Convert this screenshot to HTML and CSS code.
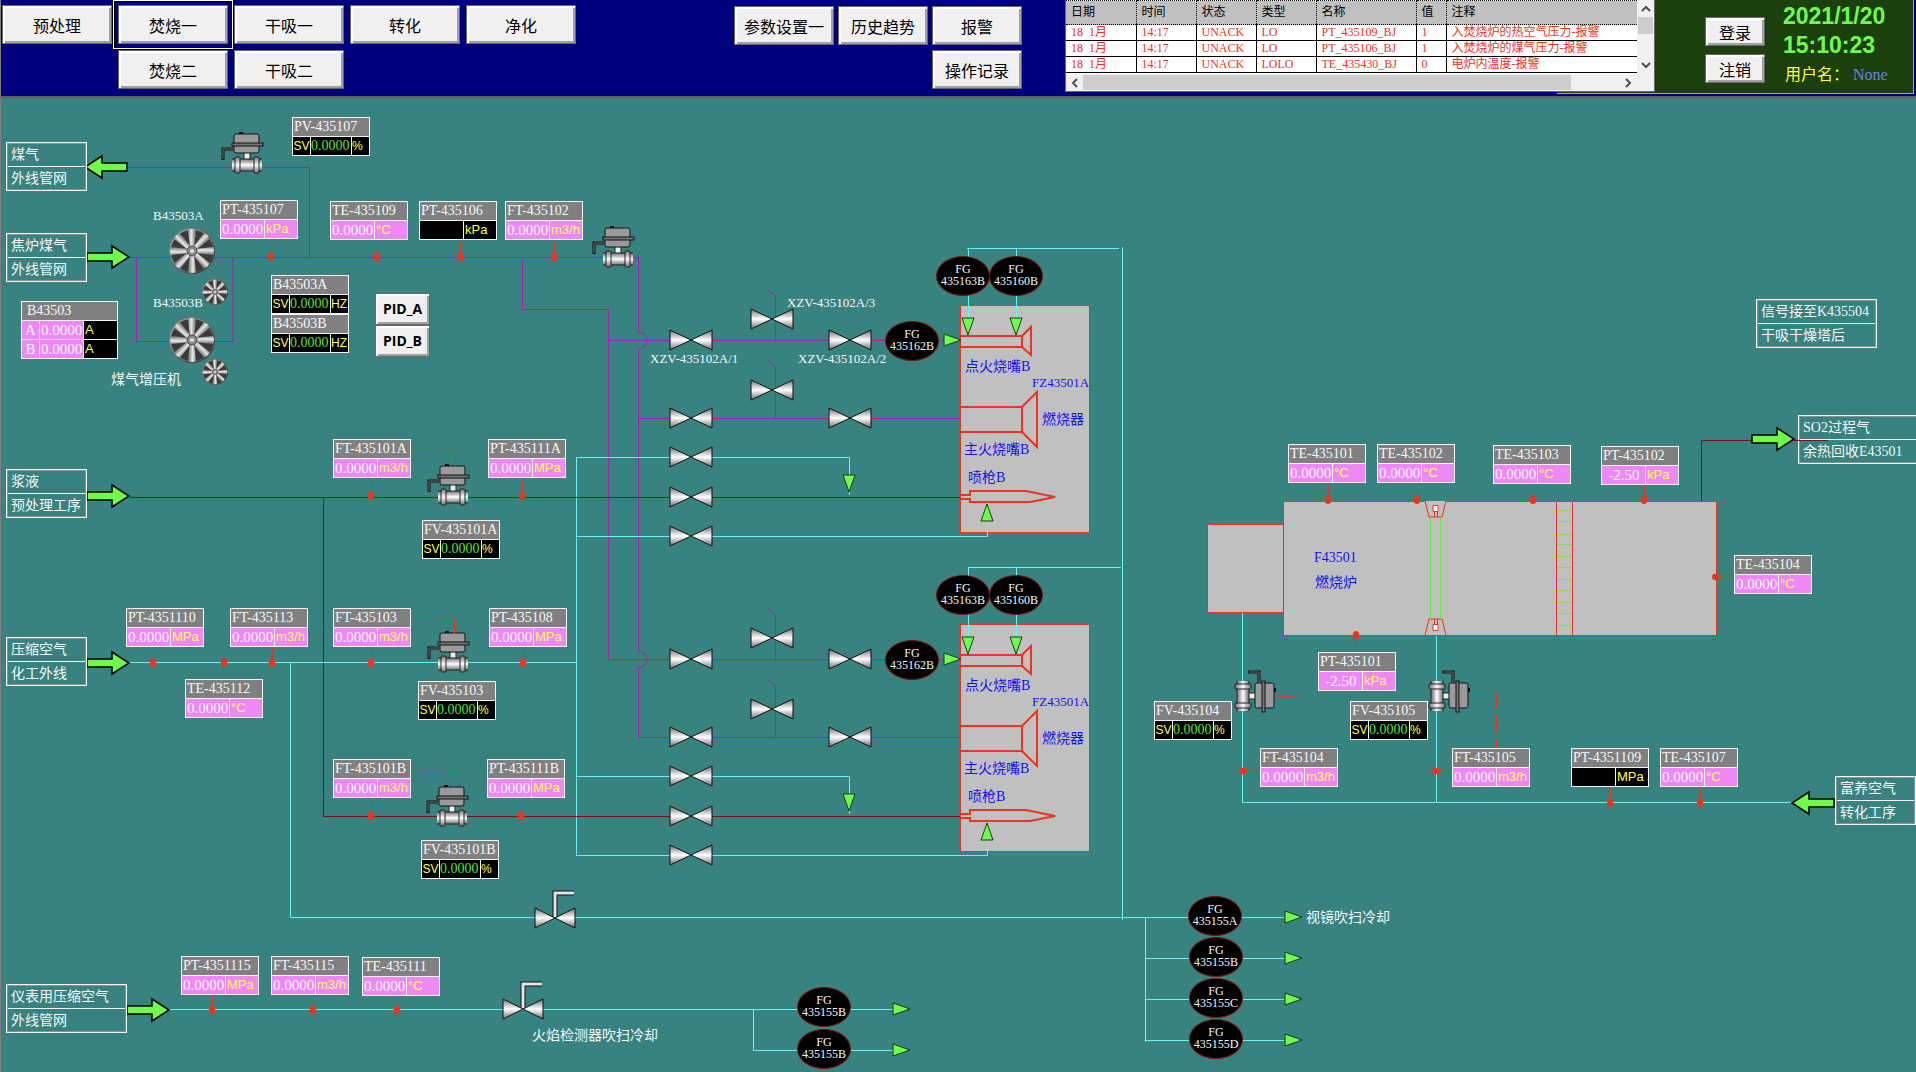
FILE: index.html
```html
<!DOCTYPE html>
<html lang="zh-CN">
<head>
<meta charset="utf-8">
<title>焚烧一</title>
<link rel="stylesheet" href="styles.css">
</head>
<body>
<header class="topbar">
  <nav class="pages">
    <button class="btn">预处理</button>
    <button class="btn btn-current" aria-current="page">焚烧一</button>
    <button class="btn">干吸一</button>
    <button class="btn">转化</button>
    <button class="btn">净化</button>
    <button class="btn col-2">焚烧二</button>
    <button class="btn">干吸二</button>
  </nav>
  <nav class="tools">
    <button class="btn">参数设置一</button>
    <button class="btn">历史趋势</button>
    <button class="btn">报警</button>
    <button class="btn col-3">操作记录</button>
  </nav>
  <section class="alarms">
    <div class="alarm-list">
      <table class="alarm-table">
        <colgroup><col class="c-date"><col class="c-mid"><col class="c-mid"><col class="c-mid"><col class="c-name"><col class="c-val"><col></colgroup>
        <thead><tr><th>日期</th><th>时间</th><th>状态</th><th>类型</th><th>名称</th><th>值</th><th>注释</th></tr></thead>
        <tbody>
          <tr><td>18&nbsp; 1月</td><td>14:17</td><td>UNACK</td><td>LO</td><td>PT_435109_BJ</td><td>1</td><td>入焚烧炉的热空气压力-报警</td></tr>
          <tr><td>18&nbsp; 1月</td><td>14:17</td><td>UNACK</td><td>LO</td><td>PT_435106_BJ</td><td>1</td><td>入焚烧炉的煤气压力-报警</td></tr>
          <tr><td>18&nbsp; 1月</td><td>14:17</td><td>UNACK</td><td>LOLO</td><td>TE_435430_BJ</td><td>0</td><td>电炉内温度-报警</td></tr>
        </tbody>
      </table>
      <div class="scroll scroll-v">
        <svg class="chev" viewBox="0 0 10 10"><path d="M1 7 5 3 9 7"/></svg>
        <span class="thumb-v"></span>
        <svg class="chev push" viewBox="0 0 10 10"><path d="M1 3 5 7 9 3"/></svg>
      </div>
    </div>
    <div class="scroll scroll-h">
      <svg class="chev" viewBox="0 0 10 10"><path d="M7 1 3 5 7 9"/></svg>
      <span class="thumb-h"></span>
      <svg class="chev push" viewBox="0 0 10 10"><path d="M3 1 7 5 3 9"/></svg>
    </div>
  </section>
  <section class="session">
    <div class="session-buttons">
      <button class="btn btn-small">登录</button>
      <button class="btn btn-small">注销</button>
    </div>
    <div class="clock">
      <time class="clock-line">2021/1/20</time>
      <time class="clock-line">15:10:23</time>
      <p class="user">用户名：<span class="user-name">None</span></p>
    </div>
  </section>
</header>

<main class="plant" id="plant">
<svg class="pipes">
  <defs>
    <linearGradient id="metal" x1="0" y1="0" x2="0" y2="1"><stop offset="0" stop-color="#6e6e6e"/><stop offset=".5" stop-color="#fff"/><stop offset="1" stop-color="#6e6e6e"/></linearGradient>
    <linearGradient id="blade" x1="0" y1="0" x2="1" y2="0"><stop offset="0" stop-color="#8a8a8a"/><stop offset=".4" stop-color="#e8e8e8"/><stop offset="1" stop-color="#6a6a6a"/></linearGradient>
    <linearGradient id="disc" x1="0" y1="0" x2="1" y2="1"><stop offset="0" stop-color="#a0a0a0"/><stop offset="1" stop-color="#3c3c3c"/></linearGradient>
    <g id="valve"><path d="M-21-10 0 0-21 10ZM21-10 0 0 21 10Z" fill="url(#metal)" stroke="#111"/></g>
    <g id="handvalve">
      <path d="M0 0V-25H19" fill="none" stroke="#111" stroke-width="5"/>
      <path d="M0 0V-25H19" fill="none" stroke="#e4e4e4" stroke-width="3"/>
      <path d="M-20-10 0 0-20 10ZM20-10 0 0 20 10Z" fill="url(#metal)" stroke="#111"/>
    </g>
    <g id="actuator">
      <path d="M-14-16H-24V-5" fill="none" stroke="#111" stroke-width="3"/>
      <path d="M-14-16H-24V-6" fill="none" stroke="#777" stroke-width="1"/>
      <path d="M-8-33h4v2h-4Z" fill="#111"/>
      <rect x="-3" y="-13" width="6" height="8" fill="#eee" stroke="#222"/>
      <rect x="-13" y="-31" width="25" height="19" rx="2" fill="#9a9a9a" stroke="#111"/>
      <rect x="-15" y="-22" width="31" height="3" fill="#777" stroke="#111"/>
      <rect x="-15" y="-6" width="30" height="12" fill="url(#metal)"/>
      <path d="M-15-6H15M-15 6H15" stroke="#222"/>
      <rect x="-12" y="-8" width="5" height="16" rx="1" fill="url(#metal)" stroke="#222"/>
      <rect x="7" y="-8" width="5" height="16" rx="1" fill="url(#metal)" stroke="#222"/>
    </g>
    <path id="vane" d="M-2-3-4-21Q0-23 4-21L2-3Z" fill="url(#blade)"/>
    <g id="fan">
      <circle r="23" fill="#333"/>
      <circle r="22" fill="#3a3a3a" stroke="url(#disc)" stroke-width="2"/>
      <use href="#vane"/><use href="#vane" transform="rotate(45)"/><use href="#vane" transform="rotate(90)"/><use href="#vane" transform="rotate(135)"/>
      <use href="#vane" transform="rotate(180)"/><use href="#vane" transform="rotate(225)"/><use href="#vane" transform="rotate(270)"/><use href="#vane" transform="rotate(315)"/>
      <circle r="5" fill="#8a8a8a" stroke="#444"/><circle r="2" fill="#ddd"/>
    </g>
    <path id="arrow" d="M0-4H25V-11L42 0 25 11V4H0Z" fill="#70fb4c" stroke="#000" stroke-width="1.5"/>
    <path id="tri" d="M0-6 17 0 0 6Z" fill="#70fb4c" stroke="#143c14"/>
    <g id="probe"><path d="M.5 0V-15" stroke="#e63523"/><path d="M0-6Q1-4 3-2 4 4 0 4-4 4-3-2-1-4 0-6Z" fill="#ee3322"/></g>

    <!-- one burner train: igniter, main burner and spray lance with their supply lines -->
    <g id="train">
      <g class="gas">
        <path d="M608.5 340.5H946M638.5 418.5H960M775.5 340V296L767 289M775.5 418V367L767 360"/>
      </g>
      <path class="slurry" d="M576 497.5H960"/>
      <path class="air" d="M577 457.5H849.5V495M577 536.5H987.5V520"/>
      <rect x="960.5" y="305.5" width="129" height="227" fill="#c0c0c0" stroke="#e63523"/>
      <path class="air" d="M968.5 248V320M1016.5 248V320M987.5 533V520"/>
      <g fill="none" stroke="#ee3322" stroke-width="2">
        <path d="M960 336H1022V347H960M1022 336 1031 327V355L1022 347"/>
        <path d="M960 407H1022V432H960M1022 407 1037 392V447L1022 432"/>
        <path d="M960 495H970V491H1026L1055 497 1030 502H970V499H960"/>
      </g>
      <use href="#valve" x="691" y="340"/><use href="#valve" x="772" y="319"/><use href="#valve" x="850" y="340"/>
      <use href="#valve" x="772" y="390"/><use href="#valve" x="691" y="418"/><use href="#valve" x="850" y="418"/>
      <use href="#valve" x="691" y="457"/><use href="#valve" x="691" y="497"/><use href="#valve" x="691" y="536"/>
      <use href="#tri" transform="translate(944 340)"/>
      <use href="#tri" transform="translate(968 318) rotate(90)"/><use href="#tri" transform="translate(1016 318) rotate(90)"/>
      <use href="#tri" transform="translate(849 475) rotate(90)"/><use href="#tri" transform="translate(987 521) rotate(-90)"/>
      <g class="blue">
        <text x="965" y="371">点火烧嘴B</text><text x="1032" y="387" class="small">FZ43501A</text><text x="1042" y="424">燃烧器</text>
        <text x="964" y="454">主火烧嘴B</text><text x="968" y="482">喷枪B</text>
      </g>
    </g>
  </defs>

  <g transform="translate(0 -98)">
    <g class="gas">
      <path d="M128 167.5H309.5V257M129 257.5H638.5V332M638 332C650 332 650 349 638 349M638.5 349V651M638 651C650 651 650 668 638 668M638.5 668V737.5"/>
      <path d="M136.5 257V341.5H233V257M522.5 260V309.5H608.5V659"/>
    </g>
    <path class="slurry" d="M130 497.5H577M323.5 497V816M323 816.5H577"/>
    <path class="air" d="M129 662.5H576M576.500 457V856M290.5 662V917.5H1284M1122.5 247V920M967 248.5H1119M969 567.5H1121M1145.5 917V1042M1145 958.5H1284M1145 999.5H1284M1145 1040.5H1284M169 1009.5H893M753.5 1009V1050.5H893"/>

    <use href="#train"/>
    <use href="#train" y="319"/>

    <!-- furnace F43501 -->
    <path class="air" d="M1242.5 613V802.5H1791M1436.5 636V802"/>
    <path class="slurry" d="M1701.5 501V440.5H1755"/>
    <g fill="#c0c0c0" stroke="#e63523">
      <rect x="1207.5" y="524.5" width="76" height="88"/>
      <rect x="1283.5" y="501.5" width="433" height="134"/>
      <path d="M1425 501 1429 517H1442L1446 501M1425 635 1429 619H1442L1446 635M1434.5 511V517M1437.5 511V517M1434.5 619V625M1437.5 619V625M1556.5 501V635M1572.5 501V635"/>
      <path fill="#fff" d="M1433 505.5h5v6h-5ZM1433 624.5h5v6h-5Z"/>
    </g>
    <path stroke="#70e84c" d="M1430.5 518V619M1440.5 518V619M1557 510.5h15M1557 521.5h15M1557 534.5h15M1557 544.5h15M1557 556.5h15M1557 567.5h15M1557 579.5h15M1557 590.5h15M1557 602.5h15M1557 613.5h15M1557 625.5h15"/>
    <g class="blue"><text x="1314" y="562">F43501</text><text x="1315" y="587">燃烧炉</text></g>

    <!-- signal lines -->
    <g fill="none" stroke="#e63523">
      <path d="M413 451.5H431M437 451.5H455.5V467M413 619.5H431M437 619.5H454.5V635M410 773.5H429M434 773.5H453.5V789"/>
      <path d="M1276 696.5H1301.5V749M1470 693.5H1496.5V748" stroke-dasharray="18 6"/>
    </g>

    <use href="#actuator" x="247" y="165"/><use href="#actuator" x="618" y="259"/>
    <use href="#actuator" x="453" y="497"/><use href="#actuator" x="453" y="664"/><use href="#actuator" x="452" y="818"/>
    <use href="#actuator" transform="translate(1243 696) rotate(90)"/><use href="#actuator" transform="translate(1437 696) rotate(90)"/>
    <path stroke="#e63523" d="M455.5 451V466M454.5 619V634M453.5 773V788"/>
    <use href="#handvalve" x="555" y="918"/><use href="#handvalve" x="523" y="1009"/>

    <use href="#fan" x="192" y="251"/><use href="#fan" x="192" y="340"/>
    <use href="#fan" transform="translate(215 292) scale(.56)"/><use href="#fan" transform="translate(215 372) scale(.56)"/>

    <use href="#arrow" transform="translate(127 167) rotate(180)"/><use href="#arrow" x="87" y="257"/>
    <use href="#arrow" x="87" y="496"/><use href="#arrow" x="87" y="663"/><use href="#arrow" x="127" y="1010"/>
    <use href="#arrow" x="1752" y="439"/><use href="#arrow" transform="translate(1834 803) rotate(180)"/>

    <use href="#tri" x="1285" y="917"/><use href="#tri" x="1285" y="958"/><use href="#tri" x="1285" y="999"/><use href="#tri" x="1285" y="1040"/>
    <use href="#tri" x="893" y="1009"/><use href="#tri" x="893" y="1050"/>

    <use href="#probe" x="271" y="257"/><use href="#probe" x="377" y="257"/><use href="#probe" x="460" y="257"/><use href="#probe" x="554" y="257"/>
    <use href="#probe" x="371" y="496"/><use href="#probe" x="522" y="496"/>
    <use href="#probe" x="153" y="663"/><use href="#probe" x="272" y="663"/><use href="#probe" x="371" y="663"/><use href="#probe" x="523" y="663"/>
    <use href="#probe" transform="translate(224 662) rotate(180)"/>
    <use href="#probe" x="371" y="816"/><use href="#probe" x="521" y="816"/>
    <use href="#probe" x="212" y="1010"/><use href="#probe" x="313" y="1010"/><use href="#probe" x="397" y="1010"/>
    <use href="#probe" x="1328" y="500"/><use href="#probe" x="1417" y="500"/><use href="#probe" x="1533" y="500"/><use href="#probe" x="1644" y="500"/>
    <use href="#probe" transform="translate(1716 577) rotate(90)"/><use href="#probe" transform="translate(1356 635) rotate(180)"/>
    <use href="#probe" transform="translate(1243 771) rotate(90)"/><use href="#probe" transform="translate(1436 771) rotate(90)"/>
    <use href="#probe" x="1610" y="803"/><use href="#probe" x="1700" y="803"/>

    <g class="white">
      <text x="153" y="220" class="small">B43503A</text><text x="153" y="307" class="small">B43503B</text><text x="111" y="384">煤气增压机</text>
      <text x="532" y="1040">火焰检测器吹扫冷却</text><text x="1306" y="922">视镜吹扫冷却</text>
    </g>
    <g class="white small">
      <text x="787" y="307">XZV-435102A/3</text><text x="650" y="363">XZV-435102A/1</text><text x="798" y="363">XZV-435102A/2</text>
    </g>
  </g>
</svg>
<div class="pid">
  <button class="btn btn-pid">PID_A</button>
  <button class="btn btn-pid">PID_B</button>
</div>
</main>
<script src="plant.js"></script>
</body>
</html>
```
FILE: styles.css
```css
* { box-sizing: border-box; }

body {
  margin: 0;
  min-height: 100vh;
  display: flex;
  flex-direction: column;
  background: #388280;
  font: 14px/18px "Liberation Serif", "Noto Sans CJK SC", serif;
  color: #f4f8f8;
  overflow-x: hidden;
}

/* top bar */
.topbar {
  display: grid;
  grid-template-columns: 731px 333px 590px 1fr;
  background: #00007e;
  border-bottom: 2px solid #5f5f5f;
  border-left: 1px solid #808080;
  height: 98px;
}
.pages, .tools {
  display: grid;
  grid-auto-rows: 39px;
  align-content: start;
}
.pages { grid-template-columns: repeat(5, 110px); gap: 6px; padding: 5px 0 0 1px; }
.tools { grid-template-columns: 100px 90px 90px; gap: 5px 4px; padding: 6px 0 0 2px; }
.col-2 { grid-column: 2; }
.col-3 { grid-column: 3; }

.btn {
  padding: 0;
  background: #f0f0f0;
  border: 1px solid #696969;
  box-shadow: inset 2px 2px #fff, inset -2px -2px #a0a0a0;
  color: #000;
  font: 16px/20px "Noto Sans CJK SC", sans-serif;
}
.btn-current {
  outline: 1px solid #fff;
  outline-offset: 4px;
  box-shadow: inset 2px 2px #fff, inset -2px -2px #a0a0a0, 0 0 0 3px #00007e, 0 0 0 6px #000;
}
.btn-small { width: 60px; height: 29px; }
.btn-pid { height: 32px; font: bold 14px/18px "Open Sans", sans-serif; }

/* alarm list */
.alarms {
  position: relative;
  z-index: 1;
  height: 92px;
  background: #f0f0f0;
  border: 1px solid #696969;
  border-top: 0;
  display: flex;
  flex-direction: column;
}
.alarm-list { display: flex; background: #fff; height: 74px; }
.alarm-table {
  flex: 1;
  width: 0;
  table-layout: fixed;
  border-collapse: collapse;
  font: 12px/15px "Liberation Serif", "Noto Sans CJK SC", serif;
  color: #ee3322;
  height: 73px;
}
.c-date { width: 70px; }
.c-mid { width: 60px; }
.c-name { width: 100px; }
.c-val { width: 30px; }
.alarm-table th {
  height: 24px;
  padding: 0 0 0 5px;
  background: #c0c0c0;
  border: 1px dotted #000;
  border-left: 0;
  color: #000;
  font-weight: normal;
  text-align: left;
}
.alarm-table td {
  padding: 0 0 0 5px;
  border-right: 1px solid #000;
  border-bottom: 1px solid #000;
  white-space: nowrap;
}
.alarm-table td:last-child, .alarm-table th:last-child { border-right: 0; }
.scroll { display: flex; align-items: center; background: #f0f0f0; }
.scroll-v { flex-direction: column; width: 17px; padding: 4px 0; }
.scroll-h { flex: 1; padding: 0 21px 0 4px; }
.thumb-v { width: 15px; height: 17px; margin-top: 3px; background: #cdcdcd; }
.thumb-h { width: 488px; height: 15px; margin-left: 3px; background: #cdcdcd; }
.chev { width: 10px; height: 10px; fill: none; stroke: #505050; stroke-width: 2; }
.scroll-v .push { margin-top: auto; }
.scroll-h .push { margin-left: auto; }

/* session panel */
.session {
  display: flex;
  height: 94px;
  margin: 0 2px 0 -98px;
  padding-left: 148px;
  background: #1b400e;
  border: solid #b4b432;
  border-width: 0 1px 1px 0;
}
.session-buttons { display: flex; flex-direction: column; gap: 8px; padding-top: 17px; }
.clock { padding: 2px 0 0 18px; }
.clock-line { display: block; color: #70fb4c; font: bold 23px/29px "Liberation Sans", sans-serif; }
.user { display: flex; margin: 4px 0 0 2px; color: #ffff40; font: 16px/22px "Liberation Serif", "Noto Sans CJK SC", serif; }
.user-name { margin-left: 4px; color: #7080e8; }

/* plant diagram */
.plant {
  position: relative;
  flex: 1;
  min-height: 974px;
  overflow: hidden;
  border-left: 1px solid #808080;
}
.pipes { position: absolute; top: 0; left: -1px; width: 100%; height: 100%; overflow: visible; }
.gas, .air, .slurry { fill: none; }
.gas { stroke: #a81cb4; }
.air { stroke: #68f4f4; }
.slurry { stroke: #7a1410; }
.blue { fill: #1212ee; }
.white { fill: #f4f8f8; }
.small { font-size: 13px; }

.pid { position: absolute; left: 374px; top: 195px; width: 55px; display: grid; }

.tag {
  position: absolute;
  width: 78px;
  display: flex;
  flex-wrap: wrap;
  gap: 1px;
  padding: 1px;
  background: #f4f4f4;
  white-space: nowrap;
}
.tag-wide { width: 97px; }
.tag-name { flex: 0 0 100%; height: 18px; padding-left: 1px; background: #808080; }
.tag-wide .tag-name { padding-left: 5px; }
.tag-value, .tag-unit, .tag-key { height: 18px; }
.tag-value { width: 43px; padding-left: 1px; background: #ee88f8; font-size: 15px; }
.tag-unit { flex: 1; width: 0; padding-left: 1px; background: #ee88f8; color: #ffff54; font: 13px/18px "Liberation Sans", "Noto Sans CJK SC", sans-serif; }
.tag-key { width: 17px; text-align: center; background: #ee88f8; font-size: 15px; }
.tag-wide .tag-unit { flex: 0 0 33px; }
.tag-sv .tag-key, .tag-off .tag-value, .tag-sv .tag-value, .tag-off .tag-unit, .tag-sv .tag-unit, .tag-wide .tag-unit { background: #000; }
.tag-sv .tag-key { color: #ffff54; font: 12px/18px "Liberation Sans", sans-serif; }
.tag-sv .tag-unit { padding: 0; font-size: 12px; }
.tag-sv .tag-value { width: 40px; padding: 0; color: #58e03c; font-size: 14px; }
.tag-short .tag-value { text-align: center; }

.port {
  position: absolute;
  width: 81px;
  border: 1px solid #f4f4f4;
  outline: 1px solid #909090;
  outline-offset: -2px;
  white-space: nowrap;
}
.port-wide { width: 121px; }
.port-line { height: 23px; padding-left: 4px; line-height: 23px; }
.port-line + .port-line { height: 24px; border-top: 1px solid #f4f4f4; }

.gauge {
  position: absolute;
  width: 54px;
  height: 40px;
  padding-top: 6px;
  border: 1px solid #781410;
  border-radius: 50%;
  background: #000;
  font-size: 12px;
  line-height: 12px;
  text-align: center;
}
.gauge-line { display: block; margin: 0 -2px; }
.outlet { position: absolute; left: 1792px; top: 342px; width: 35px; border-top: 1px solid #7a1410; }
```
FILE: plant.js
```js
const plant = document.getElementById('plant');
const ORIGIN = { x: 1, y: 98 };

function el(cls, text) {
  const node = document.createElement('div');
  node.className = cls;
  if (text !== undefined) node.textContent = text;
  return node;
}

function place(node, x, y) {
  node.style.left = x - ORIGIN.x + 'px';
  node.style.top = y - ORIGIN.y + 'px';
  plant.append(node);
}

// measured values: x, y, tag, unit, value
const readings = [
  [220, 200, 'PT-435107', 'kPa', '0.0000'],
  [330, 201, 'TE-435109', '°C', '0.0000'],
  [419, 201, 'PT-435106', 'kPa', ''],
  [505, 201, 'FT-435102', 'm3/h', '0.0000'],
  [333, 439, 'FT-435101A', 'm3/h', '0.0000'],
  [488, 439, 'PT-435111A', 'MPa', '0.0000'],
  [126, 608, 'PT-4351110', 'MPa', '0.0000'],
  [230, 608, 'FT-435113', 'm3/h', '0.0000'],
  [333, 608, 'FT-435103', 'm3/h', '0.0000'],
  [489, 608, 'PT-435108', 'MPa', '0.0000'],
  [185, 679, 'TE-435112', '°C', '0.0000'],
  [333, 759, 'FT-435101B', 'm3/h', '0.0000'],
  [487, 759, 'PT-435111B', 'MPa', '0.0000'],
  [181, 956, 'PT-4351115', 'MPa', '0.0000'],
  [271, 956, 'FT-435115', 'm3/h', '0.0000'],
  [362, 957, 'TE-435111', '°C', '0.0000'],
  [1288, 444, 'TE-435101', '°C', '0.0000'],
  [1377, 444, 'TE-435102', '°C', '0.0000'],
  [1493, 445, 'TE-435103', '°C', '0.0000'],
  [1601, 446, 'PT-435102', 'kPa', '-2.50'],
  [1734, 555, 'TE-435104', '°C', '0.0000'],
  [1318, 652, 'PT-435101', 'kPa', '-2.50'],
  [1260, 748, 'FT-435104', 'm3/h', '0.0000'],
  [1452, 748, 'FT-435105', 'm3/h', '0.0000'],
  [1571, 748, 'PT-4351109', 'MPa', ''],
  [1660, 748, 'TE-435107', '°C', '0.0000']
];
for (const [x, y, tag, unit, value] of readings) {
  const node = el('tag' + (value === '' ? ' tag-off' : value.length < 6 ? ' tag-short' : ''));
  node.append(el('tag-name', tag), el('tag-value', value), el('tag-unit', unit));
  place(node, x, y);
}

// set values: x, y, tag, unit
const setpoints = [
  [292, 117, 'PV-435107', '%'],
  [271, 275, 'B43503A', 'HZ'],
  [271, 314, 'B43503B', 'HZ'],
  [422, 520, 'FV-435101A', '%'],
  [418, 681, 'FV-435103', '%'],
  [421, 840, 'FV-435101B', '%'],
  [1154, 701, 'FV-435104', '%'],
  [1350, 701, 'FV-435105', '%']
];
for (const [x, y, tag, unit] of setpoints) {
  const node = el('tag tag-sv');
  node.append(el('tag-name', tag), el('tag-key', 'SV'), el('tag-value', '0.0000'), el('tag-unit', unit));
  place(node, x, y);
}

// booster current, both machines
const booster = el('tag tag-wide');
booster.append(el('tag-name', 'B43503'));
for (const key of ['A', 'B']) {
  booster.append(el('tag-key', key), el('tag-value', '0.0000'), el('tag-unit', 'A'));
}
place(booster, 21, 301);

// connections to other sections: x, y, medium, section, wide
const ports = [
  [6, 142, '煤气', '外线管网'],
  [6, 233, '焦炉煤气', '外线管网'],
  [6, 469, '浆液', '预处理工序'],
  [6, 637, '压缩空气', '化工外线'],
  [6, 984, '仪表用压缩空气', '外线管网', true],
  [1756, 299, '信号接至K435504', '干吸干燥塔后', true],
  [1798, 415, 'SO2过程气', '余热回收E43501', true],
  [1835, 776, '富养空气', '转化工序']
];
for (const [x, y, medium, section, wide] of ports) {
  const node = el('port' + (wide ? ' port-wide' : ''));
  node.append(el('port-line', medium), el('port-line', section));
  place(node, x, y);
}
plant.append(el('outlet'));

// flow gauges: centre x, centre y, number
const gauges = [
  [963, 276, '435163B'], [1016, 276, '435160B'], [912, 341, '435162B'],
  [963, 595, '435163B'], [1016, 595, '435160B'], [912, 660, '435162B'],
  [1215, 916, '435155A'], [1216, 957, '435155B'], [1216, 998, '435155C'], [1216, 1039, '435155D'],
  [824, 1007, '435155B'], [824, 1049, '435155B']
];
for (const [x, y, number] of gauges) {
  const node = el('gauge');
  node.append(el('gauge-line', 'FG'), el('gauge-line', number));
  place(node, x - 27, y - 20);
}
```
